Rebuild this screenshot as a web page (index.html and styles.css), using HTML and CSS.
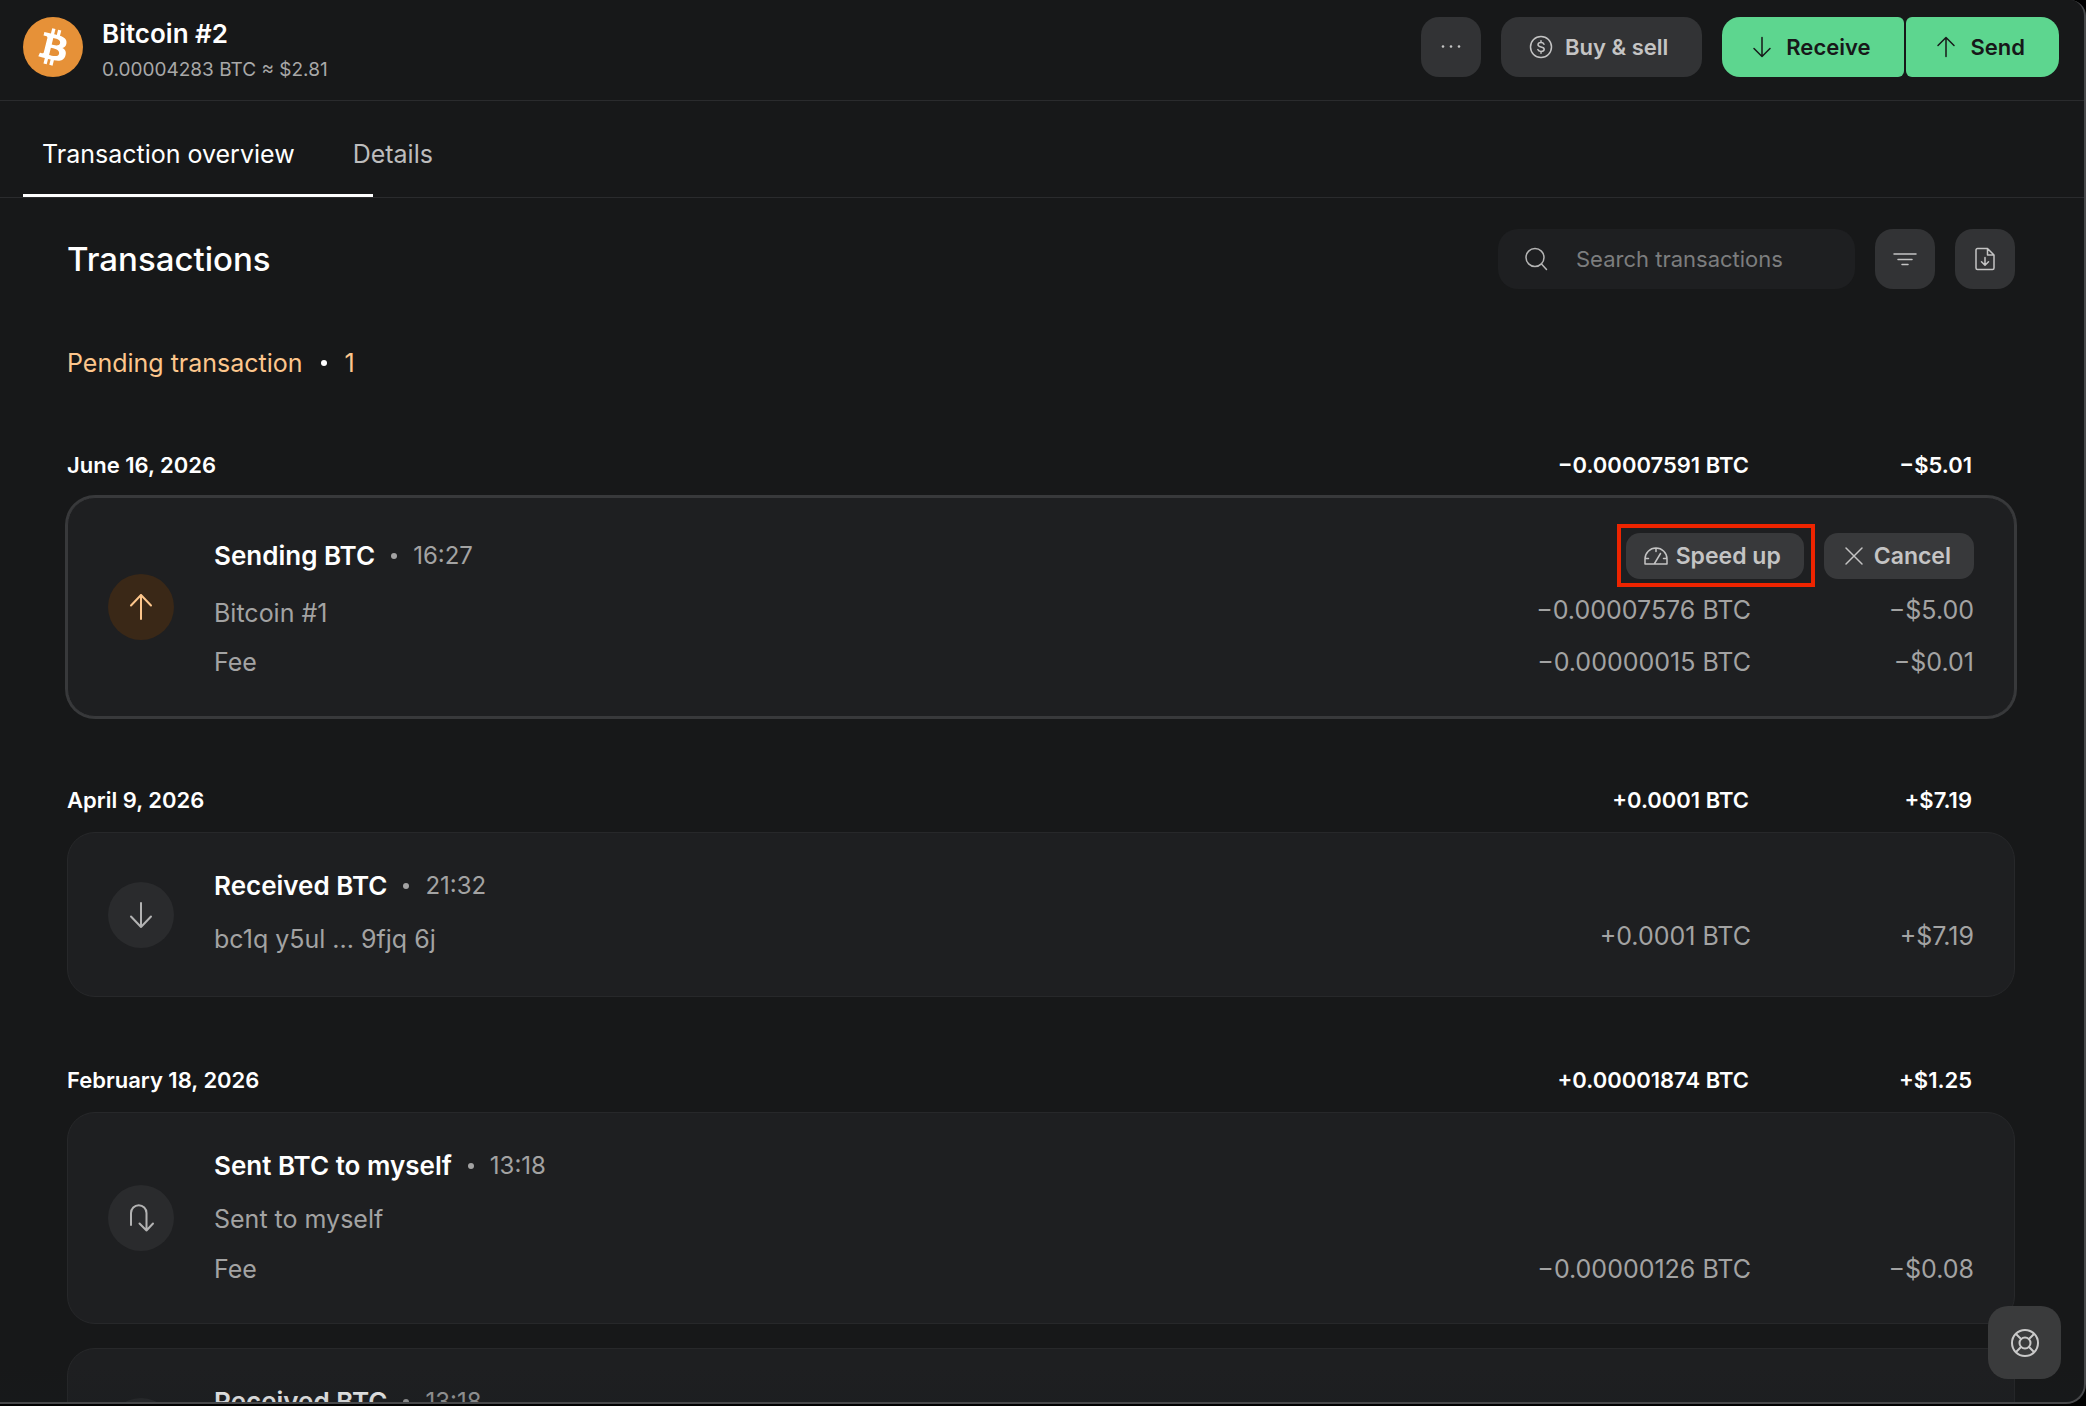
FILE: index.html
```html
<!DOCTYPE html>
<html lang="en">

<head>
    <meta charset="UTF-8">
    <meta name="viewport" content="width=device-width, initial-scale=1.0">
    <title>Bitcoin #2</title>
    <link rel="stylesheet" href="styles.css">
</head>

<body>
    <div class="app">
        <header class="account-header">
            <svg class="coin-logo" viewBox="0 0 32 32">
                <circle cx="16" cy="16" r="16" fill="#e69138" />
                <path fill="#fff" d="M23.189 14.02c.314-2.096-1.283-3.223-3.465-3.975l.708-2.84-1.728-.43-.69 2.765c-.454-.114-.92-.22-1.385-.326l.695-2.783L15.596 6l-.708 2.839c-.376-.086-.746-.17-1.104-.26l.002-.009-2.384-.595-.46 1.846s1.283.294 1.256.312c.7.175.826.638.805 1.006l-.806 3.235c.048.012.11.03.18.057l-.183-.045-1.13 4.532c-.086.212-.303.531-.793.41.018.025-1.256-.313-1.256-.313l-.858 1.978 2.25.561c.418.105.828.215 1.231.318l-.715 2.872 1.727.43.708-2.84c.472.127.93.245 1.378.357l-.706 2.828 1.728.43.715-2.866c2.948.558 5.164.333 6.097-2.333.752-2.146-.037-3.385-1.588-4.192 1.13-.26 1.98-1.003 2.207-2.538zm-3.95 5.538c-.533 2.147-4.148.986-5.32.695l.95-3.805c1.172.293 4.929.872 4.37 3.11zm.535-5.569c-.487 1.953-3.495.96-4.47.717l.86-3.45c.975.243 4.118.696 3.61 2.733z" />
            </svg>
            <div class="account-name">
                <h1>Bitcoin #2</h1>
                <p>0.00004283 BTC ≈ $2.81</p>
            </div>
            <div class="account-actions">
                <button class="btn btn-icon" aria-label="More">
                    <svg class="icon" viewBox="0 0 24 24">
                        <g fill="currentColor">
                            <circle cx="4" cy="11.500" r="1.300" />
                            <circle cx="12" cy="11.500" r="1.300" />
                            <circle cx="20" cy="11.500" r="1.300" />
                        </g>
                    </svg>
                </button>
                <button class="btn">
                    <svg class="icon" viewBox="0 0 24 24">
                        <circle cx="12" cy="12" r="10.500" />
                        <path d="M15 9.300c-.4-1-1.500-1.700-3-1.700-1.700 0-3 .8-3 2.200 0 3.100 6.200 1.300 6.200 4.400 0 1.400-1.400 2.200-3.200 2.200-1.600 0-2.800-.7-3.200-1.800M12 5.800v1.800M12 16.400v1.800" />
                    </svg>
                    Buy &amp; sell
                </button>
                <div class="btn-group">
                    <button class="btn btn-primary">
                        <svg class="icon" viewBox="0 0 24 24">
                            <path d="M12 2.500v19M4 13.500l8 8 8-8" />
                        </svg>
                        Receive
                    </button>
                    <button class="btn btn-primary">
                        <svg class="icon" viewBox="0 0 24 24">
                            <path d="M12 21.500v-19M4 10.500l8-8 8 8" />
                        </svg>
                        Send
                    </button>
                </div>
            </div>
        </header>

        <nav class="tabs">
            <a href="#overview" class="tab active">Transaction overview</a>
            <a href="#details" class="tab">Details</a>
        </nav>

        <main class="content">
            <div class="toolbar">
                <h2>Transactions</h2>
                <label class="search">
                    <svg class="icon" viewBox="0 0 24 24">
                        <circle cx="11" cy="10.500" r="9" />
                        <path d="M17.500 17l5 5.500" />
                    </svg>
                    <input type="text" placeholder="Search transactions" aria-label="Search transactions">
                </label>
                <button class="btn btn-icon" aria-label="Filter">
                    <svg class="icon" viewBox="0 0 24 24">
                        <path d="M1 7h22M5 12.500h14M9 17.500h6" />
                    </svg>
                </button>
                <button class="btn btn-icon" aria-label="Export">
                    <svg class="icon" viewBox="0 0 24 24">
                        <path d="M14.500 1.500H4.500a1.500 1.500 0 0 0-1.500 1.500v18a1.500 1.500 0 0 0 1.500 1.500h15a1.500 1.500 0 0 0 1.500-1.500V8zM14.500 1.500V8H21M12 10.500v7.500M8.500 14.800l3.500 3.500 3.500-3.500" />
                    </svg>
                </button>
            </div>

            <h3 class="pending">Pending transaction <span class="dot"></span> 1</h3>

            <section class="day">
                <div class="day-header">
                    <h4>June 16, 2026</h4>
                    <span class="amount">−0.00007591 BTC</span>
                    <span class="fiat">−$5.01</span>
                </div>
                <article class="card card-pending">
                    <div class="card-icon">
                        <svg viewBox="0 0 32 32">
                            <path d="M16 28V4M6 14.500L16 4l10 10.500" />
                        </svg>
                    </div>
                    <div class="card-body">
                        <div class="card-title">
                            <strong>Sending BTC</strong>
                            <span class="dot"></span>
                            <time>16:27</time>
                            <div class="card-actions">
                                <div class="highlight">
                                    <button class="btn btn-small">
                                        <svg class="icon" viewBox="0 0 24 24">
                                            <path d="M1 20v-5a11 11 0 0 1 22 0v5zM12 4v3.500M1 14.500h3.500M19.500 14.500H23M10.500 19.500L16.500 9.500" />
                                        </svg>
                                        Speed up
                                    </button>
                                </div>
                                <button class="btn btn-small">
                                    <svg class="icon" viewBox="0 0 24 24">
                                        <path d="M4 4l16 16M20 4L4 20" />
                                    </svg>
                                    Cancel
                                </button>
                            </div>
                        </div>
                        <div class="row target">
                            <span>Bitcoin #1</span>
                            <span class="amount">−0.00007576 BTC</span>
                            <span class="fiat">−$5.00</span>
                        </div>
                        <div class="row">
                            <span>Fee</span>
                            <span class="amount">−0.00000015 BTC</span>
                            <span class="fiat">−$0.01</span>
                        </div>
                    </div>
                </article>
            </section>

            <section class="day">
                <div class="day-header">
                    <h4>April 9, 2026</h4>
                    <span class="amount">+0.0001 BTC</span>
                    <span class="fiat">+$7.19</span>
                </div>
                <article class="card">
                    <div class="card-icon">
                        <svg viewBox="0 0 32 32">
                            <path d="M16 4v24M6 17.500L16 28l10-10.500" />
                        </svg>
                    </div>
                    <div class="card-body">
                        <div class="card-title">
                            <strong>Received BTC</strong>
                            <span class="dot"></span>
                            <time>21:32</time>
                        </div>
                        <div class="row target">
                            <span>bc1q y5ul ... 9fjq 6j</span>
                            <span class="amount">+0.0001 BTC</span>
                            <span class="fiat">+$7.19</span>
                        </div>
                    </div>
                </article>
            </section>

            <section class="day">
                <div class="day-header">
                    <h4>February 18, 2026</h4>
                    <span class="amount">+0.00001874 BTC</span>
                    <span class="fiat">+$1.25</span>
                </div>
                <article class="card">
                    <div class="card-icon">
                        <svg viewBox="0 0 32 32">
                            <path d="M6 23V11a7.750 7.750 0 0 1 15.500 0v17.500M14.500 21.500l7 7 6.500-7" />
                        </svg>
                    </div>
                    <div class="card-body">
                        <div class="card-title">
                            <strong>Sent BTC to myself</strong>
                            <span class="dot"></span>
                            <time>13:18</time>
                        </div>
                        <div class="row target">
                            <span>Sent to myself</span>
                        </div>
                        <div class="row">
                            <span>Fee</span>
                            <span class="amount">−0.00000126 BTC</span>
                            <span class="fiat">−$0.08</span>
                        </div>
                    </div>
                </article>
                <article class="card">
                    <div class="card-icon">
                        <svg viewBox="0 0 32 32">
                            <path d="M16 4v24M6 17.500L16 28l10-10.500" />
                        </svg>
                    </div>
                    <div class="card-body">
                        <div class="card-title">
                            <strong>Received BTC</strong>
                            <span class="dot"></span>
                            <time>13:18</time>
                        </div>
                    </div>
                </article>
            </section>
        </main>

        <div class="bottom-fade"></div>
        <button class="help" aria-label="Help">
            <svg viewBox="0 0 32 32">
                <circle cx="16" cy="16" r="13" />
                <circle cx="16" cy="16" r="5.500" />
                <path d="M7 7l5 5M25 7l-5 5M7 25l5-5M25 25l-5-5" />
            </svg>
        </button>
    </div>
</body>

</html>
```
FILE: styles.css
```css
* {
    box-sizing: border-box;
}

body {
    margin: 0;
    background: #000;
    color: #fff;
    font-family: Inter, "Liberation Sans", sans-serif;
    font-size: 25px;
    line-height: 30px;
}

h1, h2, h3, h4, p {
    margin: 0;
    font-weight: 400;
}

svg {
    fill: none;
    stroke: currentColor;
    stroke-width: 2;
    stroke-linecap: round;
    stroke-linejoin: round;
    flex-shrink: 0;
}

.app {
    position: relative;
    height: calc(100vh - 2px);
    overflow: hidden;
    background: #171819;
    border: solid #47484a;
    border-width: 0 2px 2px 0;
    border-radius: 0 16px 20px 0;
}

/* header */
.account-header {
    display: flex;
    align-items: flex-start;
    padding: 17px 25px 11px 23px;
    border-bottom: 1px solid #2a2b2d;
}

.coin-logo {
    width: 60px;
    height: 60px;
    stroke: none;
}

.account-name {
    flex: 1;
    margin-left: 19px;
}

.account-name h1 {
    font-size: 26px;
    line-height: 34px;
    font-weight: 600;
}

.account-name p {
    font-size: 19px;
    line-height: 38px;
    color: #a8a8a8;
}

.account-actions {
    display: flex;
    gap: 20px;
}

.btn {
    display: flex;
    align-items: center;
    gap: 12px;
    height: 60px;
    padding: 0 34px 0 28px;
    border: none;
    border-radius: 18px;
    background: #323335;
    color: #c4c4c4;
    font: 600 22px Inter, "Liberation Sans", sans-serif;
    cursor: pointer;
}

.icon {
    width: 24px;
    height: 24px;
    stroke-width: 1.5;
}

.btn-icon {
    width: 60px;
    padding: 0;
    justify-content: center;
}

.btn-icon g {
    stroke: none;
}

.btn-group {
    display: flex;
    gap: 2px;
}

.btn-primary {
    background: #5dd68f;
    color: #171819;
}

.btn-group .btn:first-child {
    border-radius: 18px 6px 6px 18px;
}

.btn-group .btn:last-child {
    border-radius: 6px 18px 18px 6px;
}

/* tabs */
.tabs {
    display: flex;
    gap: 20px;
    padding: 0 23px;
    border-bottom: 1px solid #2a2b2d;
}

.tab {
    position: relative;
    padding: 38px 19px 28px;
    color: #bdbdbd;
    text-decoration: none;
}

.tab.active {
    color: #fff;
}

.tab.active::after {
    content: "";
    position: absolute;
    left: 0;
    bottom: 0;
    width: 350px;
    height: 3px;
    background: #fff;
}

/* content */
.content {
    padding: 31px 69px 0 67px;
}

.toolbar {
    display: flex;
    align-items: center;
    gap: 20px;
}

.toolbar h2 {
    flex: 1;
    font-size: 33px;
    line-height: 40px;
    font-weight: 500;
}

.search {
    display: flex;
    align-items: center;
    width: 357px;
    height: 60px;
    padding: 0 26px;
    border-radius: 20px;
    background: #1e1f21;
    color: #b5b5b5;
}

.search input {
    flex: 1;
    min-width: 0;
    margin-left: 28px;
    padding: 0;
    border: none;
    outline: none;
    background: none;
    color: #fff;
    font: 22px Inter, "Liberation Sans", sans-serif;
}

.search input::placeholder {
    color: #7c7d7e;
}

.dot {
    width: 6px;
    height: 6px;
    border-radius: 50%;
    background: currentColor;
}

.pending {
    display: flex;
    align-items: center;
    gap: 18px;
    margin: 59px 0 71px;
    font-size: 25px;
    color: #fdc68c;
}

.pending .dot {
    background: #fff;
}

.day {
    margin-bottom: 67px;
}

.day-header {
    display: flex;
    margin-bottom: 16px;
    padding-right: 43px;
    font-size: 22px;
    line-height: 32px;
    font-weight: 600;
}

.day-header h4 {
    font-size: 22px;
    font-weight: 600;
}

.amount {
    margin-left: auto;
}

.fiat {
    width: 223px;
    text-align: right;
}

.card {
    display: flex;
    align-items: center;
    gap: 40px;
    min-height: 165px;
    padding: 35px 40px 39px;
    border: 1px solid #27282a;
    border-radius: 28px;
    background: #1e1f21;
    color: #a3a3a3;
}

.card + .card {
    margin-top: 24px;
}

.card-icon {
    display: flex;
    align-items: center;
    justify-content: center;
    width: 66px;
    height: 66px;
    margin-top: 4px;
    border-radius: 50%;
    background: #2a2b2d;
    color: #b3b3b3;
}

.card-icon svg {
    width: 32px;
    height: 32px;
}

.card-body {
    flex: 1;
    align-self: flex-start;
    display: flex;
    flex-direction: column;
    gap: 17px;
}

.card-title {
    display: flex;
    align-items: center;
    gap: 16px;
    min-height: 36px;
}

.card-title strong {
    font-size: 26px;
    font-weight: 600;
    color: #fff;
}

.card-title time {
    font-size: 24px;
}

.row {
    display: flex;
}

.target > span:first-child {
    line-height: 36px;
}

.card-pending {
    border-color: #38393b;
    box-shadow: 0 0 0 2px #38393b;
}

.card-pending .card-icon {
    background: #3a2817;
    color: #fdc68c;
}

.card-pending .card-body {
    gap: 16px;
}

.card-actions {
    display: flex;
    gap: 20px;
    margin-left: auto;
}

.btn-small {
    gap: 8px;
    height: 46px;
    padding: 0 23px 0 18px;
    border-radius: 14px;
    background: #38393b;
    font-size: 23px;
}

.highlight {
    position: relative;
}

.highlight::after {
    content: "";
    position: absolute;
    inset: -9px -11px -8px -9px;
    border: 4px solid #ee2400;
    pointer-events: none;
}

/* floating parts */
.bottom-fade {
    position: absolute;
    left: 0;
    right: 0;
    bottom: 0;
    height: 36px;
    background: linear-gradient(rgba(23, 28, 31, 0), rgba(23, 28, 31, 0.2));
}

.help {
    position: absolute;
    right: 23px;
    bottom: 23px;
    display: flex;
    align-items: center;
    justify-content: center;
    width: 73px;
    height: 73px;
    border: none;
    border-radius: 20px;
    background: #3a3b3c;
    color: #c9c9c9;
    cursor: pointer;
}

.help svg {
    width: 32px;
    height: 32px;
}
```
